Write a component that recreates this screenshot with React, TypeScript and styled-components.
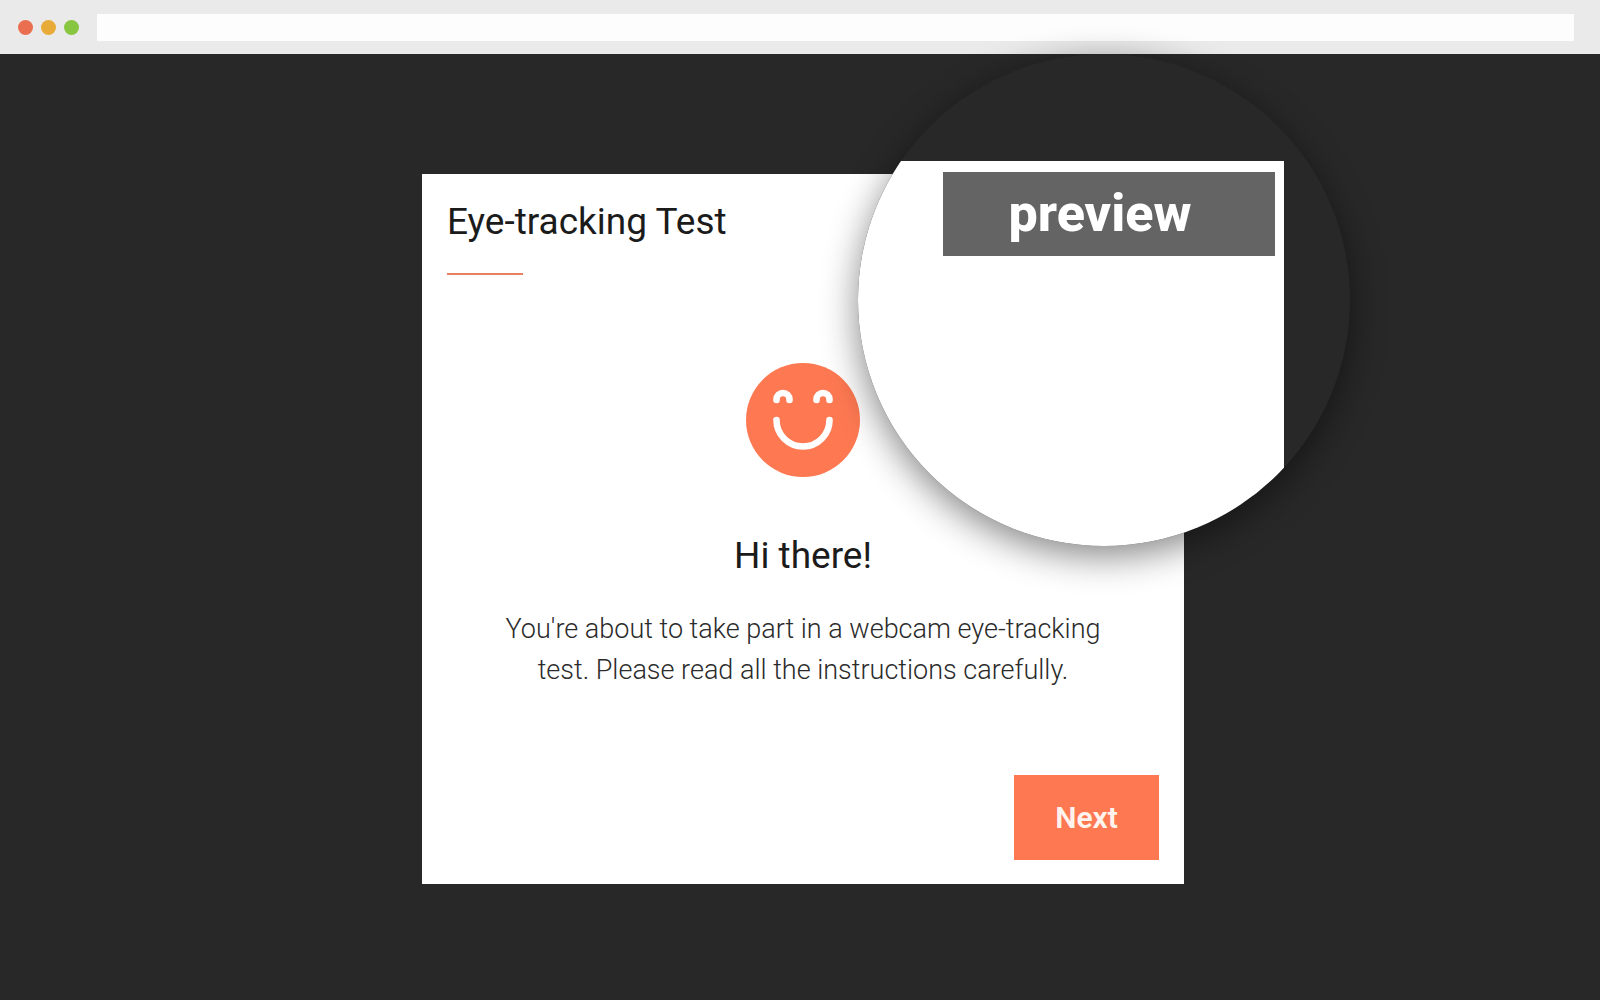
import React from "react";
import styled, { createGlobalStyle } from "styled-components";

const GlobalStyle = createGlobalStyle`
  *, *::before, *::after { box-sizing: border-box; }
  body {
    margin: 0;
    background: #282828;
    font-family: Roboto, "Liberation Sans", sans-serif;
    color: #1b1b1b;
  }
`;

const Page = styled.div`
  min-height: 100vh;
  display: flex;
  flex-direction: column;
  overflow: hidden;
`;

const BrowserBar = styled.header`
  display: flex;
  align-items: center;
  gap: 18px;
  height: 54px;
  padding: 0 26px 0 18px;
  background: #eaeaea;
`;

const WindowDots = styled.div`
  display: flex;
  gap: 8px;
`;

const Dot = styled.span<{ $color: string }>`
  width: 15px;
  height: 15px;
  border-radius: 50%;
  background: ${(p) => p.$color};
`;

const AddressInput = styled.input`
  flex: 1;
  min-width: 0;
  height: 27px;
  padding: 0 12px;
  border: 0;
  background: #fdfdfd;
  font: 14px Roboto, sans-serif;
  outline: none;
`;

const Stage = styled.main`
  flex: 1;
  display: flex;
  justify-content: center;
  align-items: flex-start;
  padding: 120px 24px 116px 30px;
`;

const Card = styled.section`
  position: relative;
  display: flex;
  flex-direction: column;
  width: 100%;
  max-width: 762px;
  padding: 24px 25px;
  background: #fff;
`;

const CardTitle = styled.h1`
  margin: 0;
  font-size: 37px;
  line-height: 48px;
  font-weight: 400;

  &::after {
    content: "";
    display: block;
    width: 76px;
    height: 2px;
    margin-top: 27px;
    background: #e8805f;
  }
`;

const Welcome = styled.div`
  display: flex;
  flex-direction: column;
  align-items: center;
  margin: 88px 0 84px;
  text-align: center;
`;

const Face = styled.svg`
  display: block;
  width: 114px;
  height: 114px;
`;

const Greeting = styled.h2`
  margin: 55px 0 29px;
  font-size: 37px;
  line-height: 48px;
  font-weight: 400;
`;

const Message = styled.p`
  max-width: 620px;
  margin: 0;
  font-size: 27px;
  line-height: 41px;
  font-weight: 300;
  color: #2b2b2b;
`;

const NextButton = styled.button`
  align-self: flex-end;
  width: 145px;
  height: 85px;
  padding: 0;
  border: 0;
  background: #fe7952;
  color: #fff3ee;
  font: 600 30px Roboto, "Liberation Sans", sans-serif;
  cursor: pointer;
`;

const Lens = styled.aside`
  position: absolute;
  top: -120px;
  right: -166px;
  width: 492px;
  height: 492px;
  padding: 107px 66px 0 0;
  border-radius: 50%;
  overflow: hidden;
  background: #282828;
  box-shadow: 0 10px 36px rgba(0, 0, 0, 0.48);
`;

const LensCard = styled.div`
  display: flex;
  justify-content: flex-end;
  align-items: flex-start;
  height: 100%;
  padding: 11px 9px;
  background: #fff;
`;

const PreviewBadge = styled.span`
  width: 332px;
  padding: 12px 18px 12px 0;
  background: #646464;
  color: #fff;
  font-size: 52px;
  line-height: 60px;
  font-weight: 800;
  text-align: center;
`;

function SmileIcon() {
  return (
    <Face viewBox="0 0 114 114" role="img" aria-label="Smiling face">
      <circle cx="57" cy="57" r="57" fill="#fe7952" />
      <g fill="none" stroke="#fff" strokeWidth="6.600" strokeLinecap="round">
        <path d="M30.500 37v-.500a6.500 6.500 0 0 1 13 0v.500" />
        <path d="M70.500 37v-.500a6.500 6.500 0 0 1 13 0v.500" />
        <path d="M30.500 57a26.500 26.500 0 0 0 53 0" />
      </g>
    </Face>
  );
}

const dotColors = ["#ea6f50", "#e9ab38", "#88c540"];

export default function App() {
  return (
    <Page>
      <GlobalStyle />
      <BrowserBar>
        <WindowDots>
          {dotColors.map((color) => (
            <Dot key={color} $color={color} />
          ))}
        </WindowDots>
        <AddressInput type="text" aria-label="Address" />
      </BrowserBar>
      <Stage>
        <Card>
          <CardTitle>Eye-tracking Test</CardTitle>
          <Welcome>
            <SmileIcon />
            <Greeting>Hi there!</Greeting>
            <Message>
              You're about to take part in a webcam eye-tracking test. Please
              read all the instructions carefully.
            </Message>
          </Welcome>
          <NextButton type="button">Next</NextButton>
          <Lens>
            <LensCard>
              <PreviewBadge>preview</PreviewBadge>
            </LensCard>
          </Lens>
        </Card>
      </Stage>
    </Page>
  );
}
